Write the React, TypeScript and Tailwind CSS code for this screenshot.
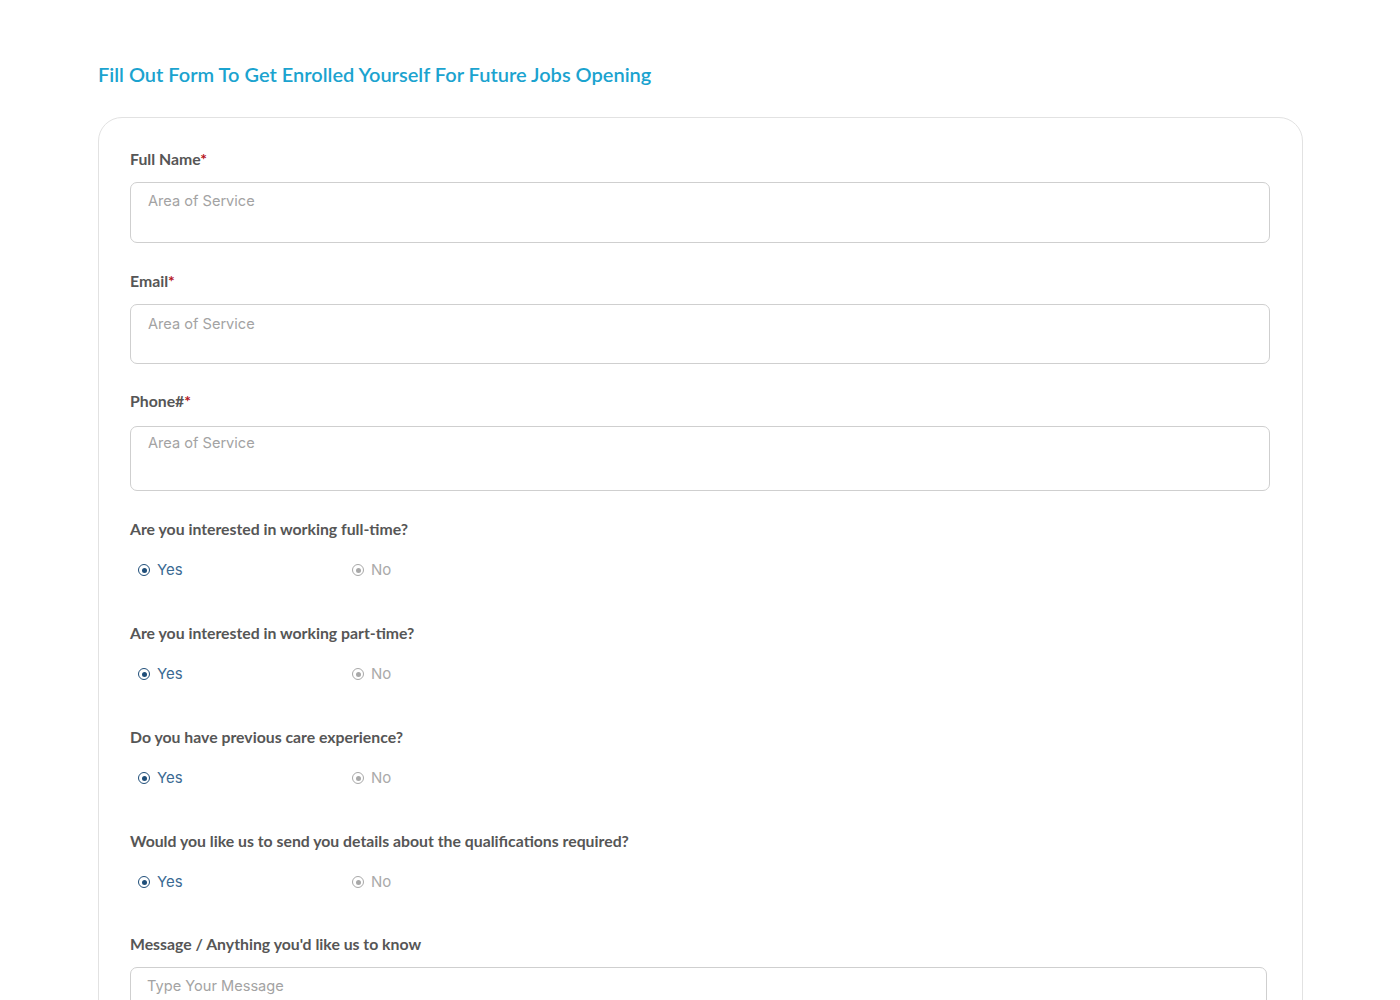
import React from 'react';

const questions = [
    'Are you interested in working full-time?',
    'Are you interested in working part-time?',
    'Do you have previous care experience?',
    'Would you like us to send you details about the qualifications required?',
];

function Label({ text, required }: { text: string; required?: boolean }) {
    return (
        <label className="block h-5 text-[15.8px] leading-5 font-bold text-[#565656] font-['Lato',sans-serif]">
            {text}
            {required && <span className="text-[#b5121b]">*</span>}
        </label>
    );
}

function Radio({ label, active }: { label: string; active?: boolean }) {
    return (
        <div className="flex items-center gap-[7px] w-[214px]">
            <span
                className={`flex items-center justify-center w-3 h-3 rounded-full border-[1.5px] ${active ? 'border-[#1f4e79]' : 'border-[#a8a8a8]'
                    }`}
            >
                <span className={`w-[5px] h-[5px] rounded-full ${active ? 'bg-[#1f4e79]' : 'bg-[#a8a8a8]'}`}></span>
            </span>
            <span className={`text-[15px] leading-5 ${active ? 'text-[#3b6a93]' : 'text-[#aaa]'}`}>{label}</span>
        </div>
    );
}

export default function App() {
    return (
        <div className="min-h-screen bg-white font-['Inter',sans-serif] px-[98px] pt-[61px]">
            <h1 className="text-[20px] leading-[26px] font-semibold text-[#1ba3cf] font-['Lato',sans-serif]">
                Fill Out Form To Get Enrolled Yourself For Future Jobs Opening
            </h1>

            <div className="mt-[30px] border border-[#e2e2e2] rounded-[24px] px-[31px] pt-[31px] pb-10 w-[1205px]">
                {/* Text fields */}
                <Label text="Full Name" required />
                <input
                    placeholder="Area of Service"
                    className="mt-[13px] block w-[1140px] h-[61px] border border-[#cfcfcf] rounded-[7px] px-[17px] pb-6 text-[14.6px] placeholder:text-[#a3a3a3] outline-none"
                />

                <div className="mt-7">
                    <Label text="Email" required />
                </div>
                <input
                    placeholder="Area of Service"
                    className="mt-[13px] block w-[1140px] h-[60px] border border-[#cfcfcf] rounded-[7px] px-[17px] pb-5 text-[14.6px] placeholder:text-[#a3a3a3] outline-none"
                />

                <div className="mt-[27px]">
                    <Label text="Phone#" required />
                </div>
                <input
                    placeholder="Area of Service"
                    className="mt-[15px] block w-[1140px] h-[65px] border border-[#cfcfcf] rounded-[7px] px-[17px] pb-8 text-[14.6px] placeholder:text-[#a3a3a3] outline-none"
                />

                {/* Yes / No questions */}
                {questions.map((q, i) => (
                    <div key={i} className={i === 0 ? 'mt-7' : 'mt-[43px]'}>
                        <Label text={q} />
                        <div className="mt-[21px] flex pl-2">
                            <Radio label="Yes" active />
                            <Radio label="No" />
                        </div>
                    </div>
                ))}

                <div className="mt-[42px]">
                    <Label text="Message / Anything you'd like us to know" />
                </div>
                <textarea
                    placeholder="Type Your Message"
                    className="mt-[13px] block w-[1137px] h-[150px] border border-[#cfcfcf] rounded-[7px] px-[16px] pt-[8px] text-[14.6px] placeholder:text-[#a3a3a3] outline-none resize-none"
                />
            </div>
        </div>
    );
}
